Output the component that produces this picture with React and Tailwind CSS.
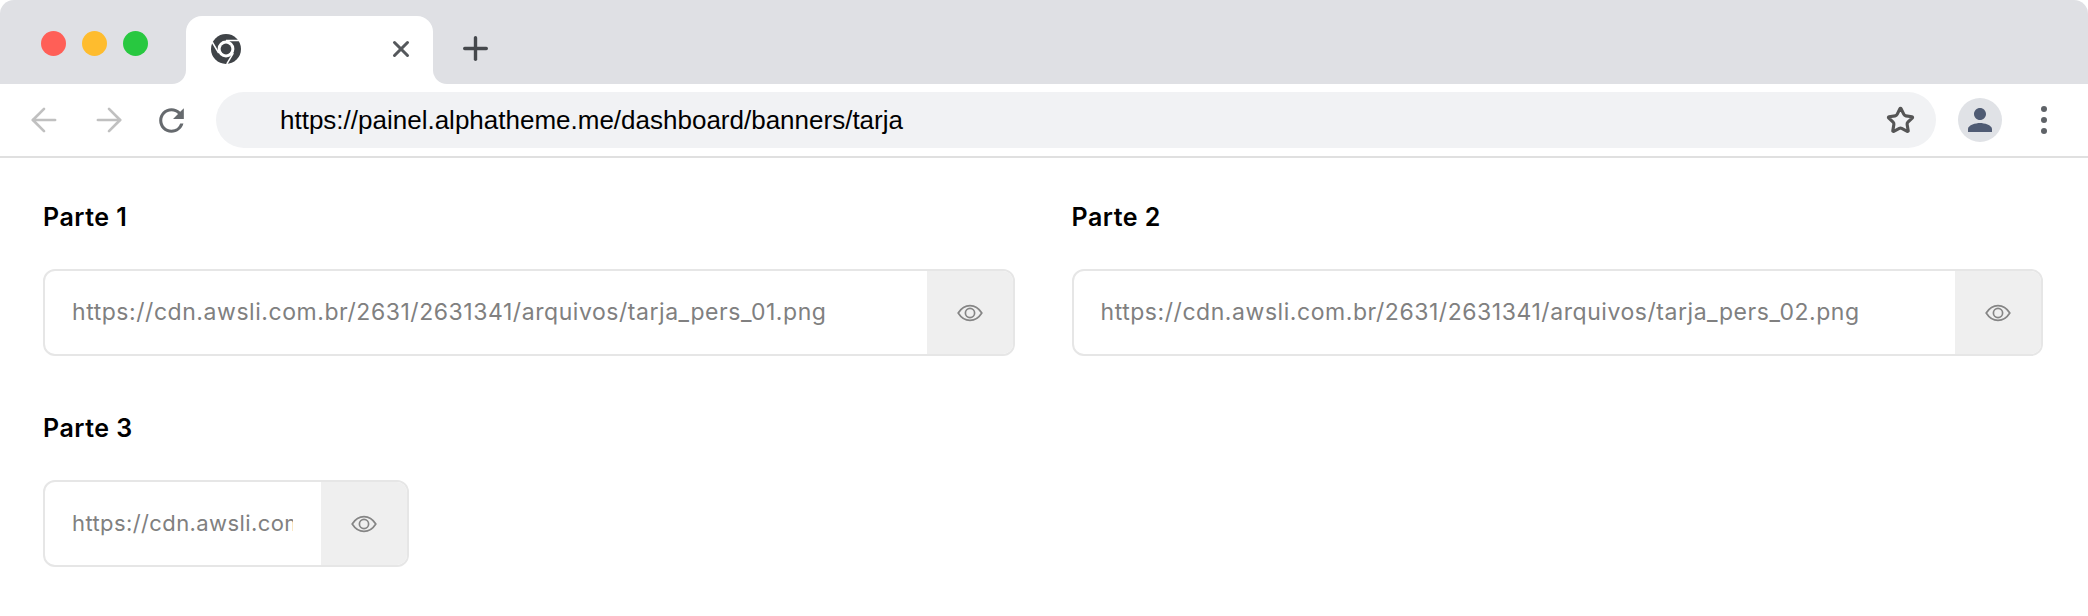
import { ArrowLeft, ArrowRight, Plus, Star, X } from "lucide-react";
import { MdPerson, MdRefresh } from "react-icons/md";

const fields = [
    { label: "Parte 1", url: "https://cdn.awsli.com.br/2631/2631341/arquivos/tarja_pers_01.png" },
    { label: "Parte 2", url: "https://cdn.awsli.com.br/2631/2631341/arquivos/tarja_pers_02.png" },
    { label: "Parte 3", url: "https://cdn.awsli.com.br/2631/2631341/arquivos/tarja_pers_03.png", narrow: true },
];

const ChromeIcon = () => (
    <svg width="30" height="30" viewBox="0 0 30 30">
        <circle cx="15" cy="15" r="15" fill="#3f4347" />
        <circle cx="15" cy="15" r="8.4" fill="#ffffff" />
        <circle cx="15" cy="15" r="5.4" fill="#3f4347" />
        <path d="M15 6.6H28M7.7 19.2L1.2 8M22.3 19.2L15.8 30" stroke="#ffffff" strokeWidth="1.5" fill="none" />
    </svg>
);

const EyeIcon = () => (
    <svg width="26" height="18" viewBox="0 0 26 18" fill="none" stroke="#858585" strokeWidth="1.7">
        <path d="M1.2 9C4.2 4.2 8.2 1.6 13 1.6S21.8 4.2 24.8 9C21.8 13.8 17.8 16.4 13 16.4S4.2 13.8 1.2 9Z" />
        <circle cx="13" cy="9" r="4.6" />
    </svg>
);

const Field = ({ label, url, narrow }) => {
    return (
        <div>
            <h3 className="text-[25px] leading-[32px] font-semibold text-black font-['Inter',sans-serif] tracking-[0.5px]">
                {label}
            </h3>
            <div
                className={`mt-[36px] flex h-[87px] overflow-hidden rounded-[12px] border-2 border-[#e6e6e6] ${
                    narrow ? "w-[366px]" : "w-full"
                }`}
            >
                <div className="flex-1 min-w-0 pl-[27px] pr-[28px] flex items-center">
                    <span
                        className={`block w-full overflow-hidden whitespace-nowrap text-[#808080] font-['Inter',sans-serif] ${
                            narrow ? "text-[22px] tracking-[0.4px]" : "text-[23px] tracking-[0.55px]"
                        }`}
                    >
                        {url}
                    </span>
                </div>
                <div className="w-[86px] shrink-0 bg-[#efefef] flex items-center justify-center">
                    <EyeIcon />
                </div>
            </div>
        </div>
    );
};

export default function App() {
    return (
        <div className="w-[2088px] h-[616px] overflow-hidden bg-white">
            {/* tab strip */}
            <div className="h-[16px] rounded-t-[14px] bg-[#dfe0e4]" />
            <div className="flex h-[68px] bg-[linear-gradient(#dfe0e4_50%,#ffffff_50%)]">
                <div className="w-[186px] bg-[#dfe0e4] rounded-br-[14px] pl-[41px] pt-[15px] flex gap-[16px]">
                    <span className="w-[25px] h-[25px] rounded-full bg-[#ff5f57]" />
                    <span className="w-[25px] h-[25px] rounded-full bg-[#febc2e]" />
                    <span className="w-[25px] h-[25px] rounded-full bg-[#28c840]" />
                </div>
                <div className="w-[247px] bg-white rounded-t-[16px] flex items-center justify-between pl-[25px] pr-[19px] pb-[3px]">
                    <ChromeIcon />
                    <X size={26} strokeWidth={2.8} color="#55585c" />
                </div>
                <div className="flex-1 bg-[#dfe0e4] rounded-bl-[14px] pl-[24px] flex items-center pb-[3px]">
                    <Plus size={37} strokeWidth={2.2} color="#45484c" />
                </div>
            </div>

            {/* toolbar */}
            <div className="h-[74px] border-b-2 border-[#e0e0e0] flex items-start pt-[8px]">
                <div className="w-[216px] h-[56px] flex items-center pl-[25px] text-[#c0c0c0]">
                    <ArrowLeft size={38} strokeWidth={1.7} />
                    <ArrowRight size={38} strokeWidth={1.7} className="ml-[27px]" />
                    <MdRefresh size={37} className="ml-[25px] text-[#666a6e]" />
                </div>
                <div className="w-[1720px] h-[56px] rounded-full bg-[#f1f2f4] flex items-center justify-between pl-[64px] pr-[21px]">
                    <span className="text-[26px] text-black font-['Liberation_Sans',sans-serif]">
                        https://painel.alphatheme.me/dashboard/banners/tarja
                    </span>
                    <Star size={29} strokeWidth={2.6} color="#555555" />
                </div>
                <div className="flex-1 h-[56px] flex items-center pl-[22px]">
                    <div className="w-[44px] h-[44px] rounded-full bg-[#e0e2e6] flex items-center justify-center">
                        <MdPerson size={36} color="#4f5b73" />
                    </div>
                    <div className="ml-[39px] flex flex-col gap-[5px]">
                        <span className="w-[6px] h-[6px] rounded-full bg-[#5f6368]" />
                        <span className="w-[6px] h-[6px] rounded-full bg-[#5f6368]" />
                        <span className="w-[6px] h-[6px] rounded-full bg-[#5f6368]" />
                    </div>
                </div>
            </div>

            {/* form */}
            <div className="grid grid-cols-2 gap-x-[57px] gap-y-[56px] pl-[43px] pr-[45px] pt-[43px]">
                {fields.map((field) => (
                    <Field key={field.label} {...field} />
                ))}
            </div>
        </div>
    );
}
